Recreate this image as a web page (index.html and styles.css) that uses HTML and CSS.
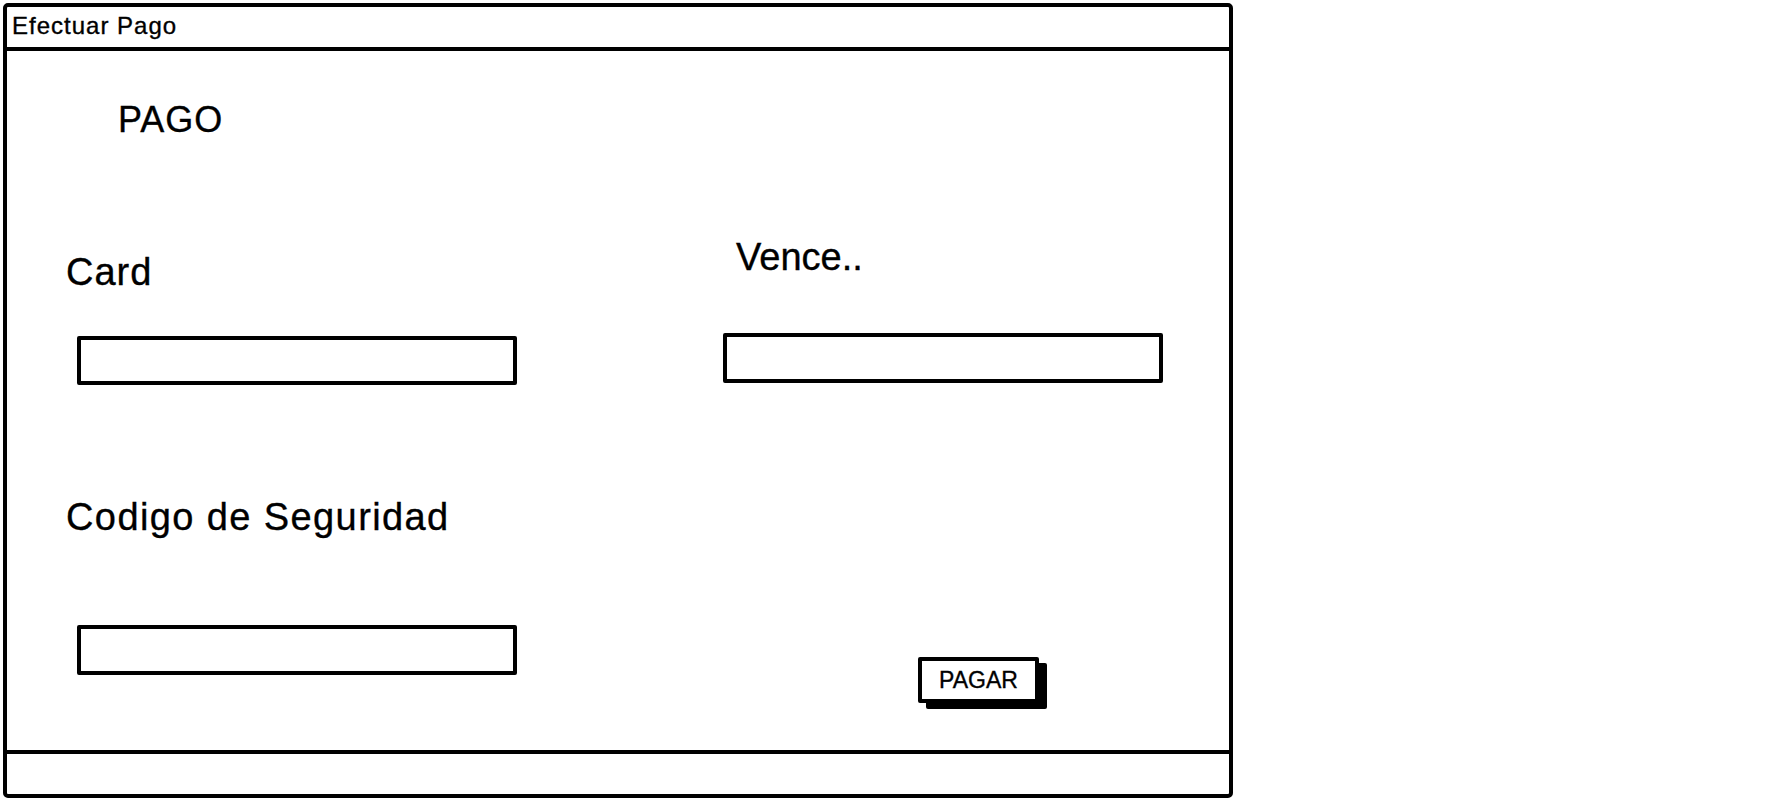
FILE: index.html
```html
<!DOCTYPE html>
<html lang="es">
<head>
    <meta charset="UTF-8">
    <title>Efectuar Pago</title>
    <link rel="stylesheet" href="styles.css">
</head>
<body>
    <div class="window">
        <div class="title-bar">Efectuar Pago</div>
        <div class="content">
            <h1 class="heading">PAGO</h1>
            <div class="form">
                <div class="field field-card">
                    <label for="card">Card</label>
                    <input type="text" id="card" name="card">
                </div>
                <div class="field field-vence">
                    <label for="vence">Vence..</label>
                    <input type="text" id="vence" name="vence">
                </div>
                <div class="field field-codigo">
                    <label for="codigo">Codigo de Seguridad</label>
                    <input type="text" id="codigo" name="codigo">
                </div>
                <div class="actions">
                    <button class="pay-button" type="button">PAGAR</button>
                </div>
            </div>
        </div>
        <div class="status-bar"></div>
    </div>
</body>
</html>
```

FILE: styles.css
```css
* {
    box-sizing: border-box;
}
body {
    margin: 0;
    padding: 0;
    background-color: #fff;
    color: #000;
    font-family: "Liberation Sans", Arial, sans-serif;
    -webkit-text-stroke: 0.35px #000;
}
.window {
    margin: 3px 0 0 3px;
    width: 1230px;
    height: 795px;
    border: 4px solid #000;
    border-radius: 5px;
    display: flex;
    flex-direction: column;
}
.title-bar {
    height: 44px;
    border-bottom: 4px solid #000;
    padding-left: 5px;
    font-size: 24px;
    line-height: 37px;
    letter-spacing: 1px;
}
.content {
    flex: 1;
}
.heading {
    margin: 51px 0 0 111px;
    font-size: 36px;
    line-height: 36px;
    font-weight: normal;
    letter-spacing: 1px;
}
.form {
    margin-top: 100px;
    display: grid;
    grid-template-columns: 657px 1fr;
    row-gap: 113px;
    align-items: start;
}
.field label {
    display: block;
    font-size: 38px;
    line-height: 38px;
    letter-spacing: 1px;
}
.field input {
    display: block;
    width: 440px;
    height: 50px;
    padding: 0 10px;
    border: 4px solid #000;
    border-radius: 2px;
    background-color: #fff;
    font-family: inherit;
    font-size: 20px;
}
.field-card {
    margin-top: 15px;
}
.field-card label,
.field-codigo label {
    margin-left: 59px;
}
.field-codigo label {
    letter-spacing: 1.4px;
}
.field-card input {
    margin: 45px 0 0 70px;
    height: 49px;
}
.field-vence label {
    margin-left: 72px;
    letter-spacing: 0;
}
.field-vence input {
    margin: 57px 0 0 59px;
}
.field-codigo input {
    margin: 89px 0 0 70px;
}
.actions {
    padding: 159px 0 0 254px;
}
.pay-button {
    width: 121px;
    height: 46px;
    border: 4px solid #000;
    border-radius: 2px;
    background-color: #fff;
    box-shadow: 8px 6px 0 #000;
    color: #000;
    font-family: inherit;
    font-size: 23px;
    padding: 0;
    cursor: pointer;
}
.status-bar {
    height: 44px;
    border-top: 4px solid #000;
}
```
